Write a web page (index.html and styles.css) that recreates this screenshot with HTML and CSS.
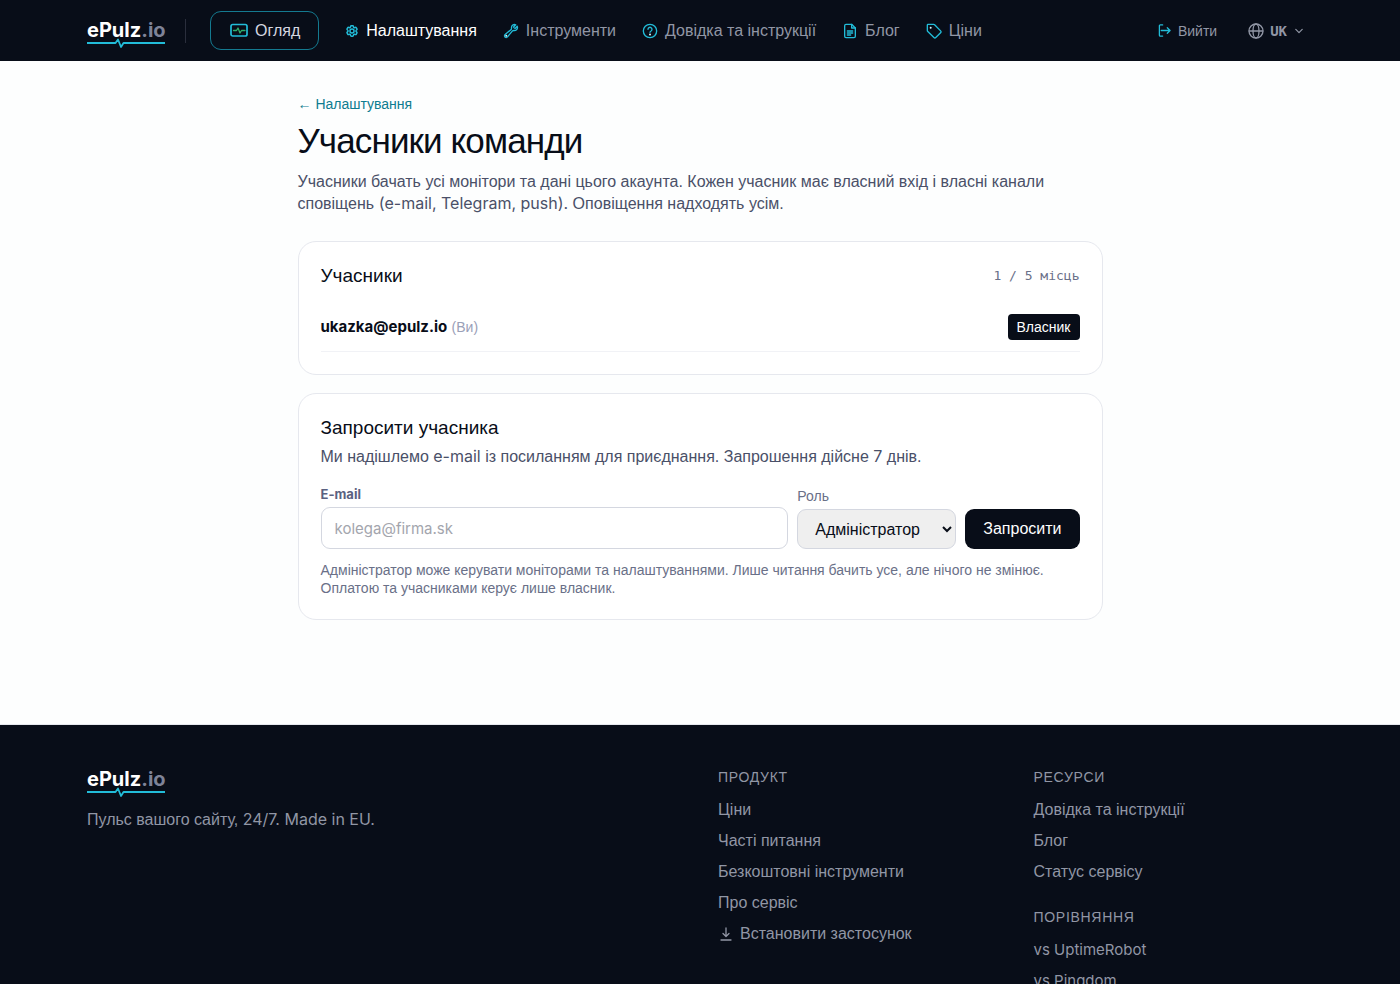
FILE: index.html
```html
<!DOCTYPE html>
<html lang="uk">
<head>
<meta charset="utf-8">
<meta name="viewport" content="width=device-width, initial-scale=1">
<title>Учасники команди – ePulz.io</title>
<link rel="stylesheet" href="styles.css">
</head>
<body>
<header class="site-header">
  <div class="container header-row">
    <a class="logo" href="#"><span class="logo-text">ePulz<span class="logo-tld">.io</span></span><svg class="logo-pulse" viewBox="0 0 78 10" aria-hidden="true"><path d="M0 5h28.500l2.500-3.500 3 7.500 2.500-4H78"/></svg></a>
    <span class="divider"></span>
    <nav class="main-nav" aria-label="Головна">
      <a class="nav-cta" href="#"><svg class="icon icon-monitor" viewBox="0 0 18 18" aria-hidden="true"><rect x="1" y="2.500" width="16" height="11.500" rx="1.800"/><path class="green" d="M3.500 8.500h3L8 6l2 5 1.500-2.500h3.500"/></svg>Огляд</a>
      <a class="nav-link active" href="#"><svg class="icon icon-gear" viewBox="0 0 24 24" aria-hidden="true"><path d="M9.600 3.900c.1-.5.600-.900 1.100-.900h2.600c.500 0 1 .4 1.100.9l.2 1.300c.1.400.300.700.600.900l.3.100c.3.200.700.200 1.100.100l1.200-.500c.5-.2 1.100 0 1.400.500l1.300 2.200c.3.500.200 1.100-.3 1.400l-1 .9c-.3.200-.4.600-.4 1v.3c0 .4.100.8.400 1l1 .9c.4.300.5.900.3 1.400l-1.300 2.200c-.3.500-.9.700-1.400.5l-1.200-.5c-.4-.1-.8-.1-1.100.1l-.3.100c-.3.200-.5.500-.6.900l-.2 1.300c-.1.500-.6.900-1.100.9h-2.600c-.5 0-1-.4-1.100-.9l-.2-1.300c-.1-.4-.3-.7-.6-.9l-.3-.1c-.3-.2-.7-.2-1.100-.1l-1.200.5c-.5.200-1.100 0-1.400-.5l-1.300-2.200c-.3-.5-.2-1.100.3-1.400l1-.9c.3-.2.400-.6.400-1v-.3c0-.4-.1-.8-.4-1l-1-.9c-.4-.3-.5-.9-.3-1.400l1.300-2.200c.3-.5.900-.7 1.400-.5l1.200.5c.4.1.8.1 1.100-.1l.3-.1c.3-.2.5-.5.6-.9z"/><circle cx="12" cy="12" r="3.500"/></svg>Налаштування</a>
      <a class="nav-link" href="#"><svg class="icon" viewBox="0 0 24 24" aria-hidden="true"><path d="M21.750 6.750a4.500 4.500 0 0 1-4.884 4.484c-1.076-.091-2.264.071-2.950.904l-7.152 8.684a2.548 2.548 0 1 1-3.586-3.586l8.684-7.152c.833-.686.995-1.874.904-2.950a4.500 4.500 0 0 1 6.336-4.486l-3.276 3.276a3.004 3.004 0 0 0 2.250 2.250l3.276-3.276c.256.565.398 1.192.398 1.852z"/><path class="dot" d="M4.900 19.100h.01"/></svg>Інструменти</a>
      <a class="nav-link" href="#"><svg class="icon" viewBox="0 0 24 24" aria-hidden="true"><circle cx="12" cy="12" r="10"/><path d="M9 9.500a3 3 0 1 1 4.600 2.500c-1 .6-1.600 1-1.600 2"/><path class="dot" d="M12 17.300h.01"/></svg>Довідка та інструкції</a>
      <a class="nav-link" href="#"><svg class="icon" viewBox="0 0 24 24" aria-hidden="true"><path d="M14.500 2H6a2 2 0 0 0-2 2v16a2 2 0 0 0 2 2h12a2 2 0 0 0 2-2V7.500z"/><path d="M14.500 2v5.500H20M8 12h8M8 15h8M8 18h5"/></svg>Блог</a>
      <a class="nav-link" href="#"><svg class="icon" viewBox="0 0 24 24" aria-hidden="true"><path d="M3 2h8.500a2 2 0 0 1 1.400.6l9 9.200a2 2 0 0 1 0 2.800l-7.200 7.200a2 2 0 0 1-2.800 0l-9.200-9A2 2 0 0 1 2 11.400V3a1 1 0 0 1 1-1z"/><path class="dot" d="M7 7h.01"/></svg>Ціни</a>
    </nav>
    <div class="header-end">
      <a class="logout" href="#"><svg class="icon icon-exit" viewBox="0 0 14 14" aria-hidden="true"><path d="M5 1H2.500a1 1 0 0 0-1 1v10a1 1 0 0 0 1 1H5M3.500 7H13M10 4l3 3-3 3"/></svg>Вийти</a>
      <button class="lang" type="button"><svg class="icon icon-globe" viewBox="0 0 24 24" aria-hidden="true"><circle cx="12" cy="12" r="10.500"/><ellipse cx="12" cy="12" rx="4.500" ry="10.500"/><path d="M2 12h20"/></svg>UK<svg class="icon icon-chevron" viewBox="0 0 10 10" aria-hidden="true"><path d="M1 3 5 7l4-4"/></svg></button>
    </div>
  </div>
</header>

<main class="page">
  <a class="back" href="#">← Налаштування</a>
  <h1 class="title">Учасники команди</h1>
  <p class="lead">Учасники бачать усі монітори та дані цього акаунта. Кожен учасник має власний вхід і власні канали сповіщень <span class="latin">(e-mail, Telegram, push).</span> Оповіщення надходять усім.</p>

  <section class="card">
    <div class="card-head">
      <h2 class="card-title">Учасники</h2>
      <span class="seats">1 / 5 місць</span>
    </div>
    <ul class="members">
      <li class="member"><span><strong class="email">ukazka@epulz.io</strong> <span class="you">(Ви)</span></span><span class="badge">Власник</span></li>
    </ul>
  </section>

  <section class="card">
    <h2 class="card-title">Запросити учасника</h2>
    <p class="card-text">Ми надішлемо <span class="latin">e-mail</span> із посиланням для приєднання. Запрошення дійсне <span class="latin">7</span> днів.</p>
    <form class="invite">
      <div class="field field-email">
        <label class="label label-email" for="email">E-mail</label>
        <input class="input" id="email" type="email" placeholder="kolega@firma.sk">
      </div>
      <div class="field">
        <label class="label" for="role">Роль</label>
        <select class="select" id="role"><option>Адміністратор</option><option>Лише читання</option></select>
      </div>
      <button class="submit" type="button">Запросити</button>
    </form>
    <p class="hint">Адміністратор може керувати моніторами та налаштуваннями. Лише читання бачить усе, але нічого не змінює. Оплатою та учасниками керує лише власник.</p>
  </section>
</main>

<footer class="site-footer">
  <div class="container footer-grid">
    <div class="footer-brand">
      <a class="logo" href="#"><span class="logo-text">ePulz<span class="logo-tld">.io</span></span><svg class="logo-pulse" viewBox="0 0 78 10" aria-hidden="true"><path d="M0 5h28.500l2.500-3.500 3 7.500 2.500-4H78"/></svg></a>
      <p class="tagline">Пульс вашого сайту, <span class="latin">24/7. Made in EU.</span></p>
    </div>
    <div class="footer-col">
      <h3 class="footer-title">Продукт</h3>
      <ul class="footer-list">
        <li><a href="#">Ціни</a></li>
        <li><a href="#">Часті питання</a></li>
        <li><a href="#">Безкоштовні інструменти</a></li>
        <li><a href="#">Про сервіс</a></li>
        <li><a class="install" href="#"><svg class="icon-download" viewBox="0 0 16 16" aria-hidden="true"><path d="M8 2v8M5 7.500 8 10.500l3-3M3 14h10"/></svg>Встановити застосунок</a></li>
      </ul>
    </div>
    <div class="footer-col">
      <h3 class="footer-title">Ресурси</h3>
      <ul class="footer-list">
        <li><a href="#">Довідка та інструкції</a></li>
        <li><a href="#">Блог</a></li>
        <li><a href="#">Статус сервісу</a></li>
      </ul>
      <h3 class="footer-title">Порівняння</h3>
      <ul class="footer-list">
        <li><a class="latin latin-link" href="#">vs UptimeRobot</a></li>
        <li><a class="latin latin-link" href="#">vs Pingdom</a></li>
      </ul>
    </div>
  </div>
</footer>
</body>
</html>
```
FILE: styles.css
```css
*, *::before, *::after { box-sizing: border-box; }

body {
  margin: 0;
  background: #fdfefe;
  color: #080d18;
  font-family: "Liberation Sans", Arial, sans-serif;
  font-size: 16px;
  line-height: 22px;
}

h1, h2, h3, p, ul { margin: 0; padding: 0; font-weight: 400; }
ul { list-style: none; }
a { color: inherit; text-decoration: none; }
button { font: inherit; cursor: pointer; }
.latin { font-family: Inter, sans-serif; line-height: 1; }
.latin-link { font-size: 15px; }

.container { max-width: 1298px; margin: 0 auto; padding: 0 36px; }

.site-header { background: #080d18; color: #9196a5; }
.header-row { display: flex; align-items: center; height: 61px; }

.logo { display: inline-flex; flex-direction: column; width: 78px; color: #fff; }
.logo-text { font: 700 20px/22px Inter, sans-serif; }
.logo-tld { color: #7e8398; }
.logo-pulse { width: 78px; height: 10px; margin-top: -3px; fill: none; stroke: #22bcd8; stroke-width: 1.8; stroke-linejoin: round; }
.header-row .logo { margin-top: 6px; }
.divider { width: 1px; height: 24px; margin: 0 24px 0 20px; background: #2a2e3c; }

.icon { flex: none; width: 16px; height: 16px; fill: none; stroke: #22bcd8; stroke-width: 2; stroke-linecap: round; stroke-linejoin: round; }
.icon .dot { stroke: #d8f6fb; stroke-width: 3; }
.icon .green { stroke: #2fae6b; stroke-width: 1.3; }
.icon-monitor { width: 18px; height: 18px; stroke-width: 1.7; }
.icon-gear { width: 14px; height: 14px; stroke-width: 2.5; }
.icon-exit { width: 13px; height: 13px; stroke-width: 1.4; }
.icon-globe { stroke: #9196a5; }
.icon-chevron { width: 8px; height: 8px; margin-left: 2px; stroke: #9196a5; stroke-width: 1.5; }

.main-nav { display: flex; align-items: center; gap: 26px; }
.nav-cta { display: flex; align-items: center; gap: 7px; height: 39px; padding: 0 18px 0 19px; border: 1px solid #147a90; border-radius: 11px; color: #d4d7e0; }
.nav-link { display: flex; align-items: center; gap: 7px; }
.nav-link.active { color: #fff; }

.header-end { display: flex; align-items: center; gap: 31px; margin-left: auto; padding-right: 10px; font-size: 14px; }
.logout { display: flex; align-items: center; gap: 7px; }
.lang { display: flex; align-items: center; gap: 6px; padding: 0; border: 0; background: none; color: #9196a5; font: 700 14px/20px "DejaVu Sans Mono", monospace; }

.page { max-width: 841px; margin: 0 auto; padding: 33px 18px 104px; }
.back { display: block; color: #0e7c90; font-size: 14px; line-height: 20px; }
.title { margin-top: 7px; font-size: 35px; line-height: 40px; letter-spacing: -0.025em; }
.lead { margin: 10px 0 26px; color: #4a5068; }

.card { padding: 22px; border: 1px solid #e6e8ee; border-radius: 18px; background: #fff; }
.card + .card { margin-top: 18px; }
.card-head { display: flex; align-items: center; justify-content: space-between; }
.card-title { font-size: 19px; line-height: 24px; }
.seats { color: #6a7088; font-family: "DejaVu Sans Mono", monospace; font-size: 13px; }
.members { margin-top: 13px; }
.member { display: flex; align-items: center; justify-content: space-between; padding: 13px 0 11px; border-bottom: 1px solid #f1f2f6; }
.email { font-family: Inter, sans-serif; font-size: 15px; font-weight: 700; line-height: 1; }
.you { color: #9aa0b8; font-size: 14px; }
.badge { padding: 3px 9px; border-radius: 4px; background: #080d18; color: #fff; font-size: 14px; line-height: 20px; }

.card-text { margin-top: 6px; color: #4a5068; }
.invite { display: flex; align-items: flex-end; gap: 9px; margin-top: 17px; }
.field { display: flex; flex-direction: column; }
.field-email { flex: 1; }
.label { margin-bottom: 4px; color: #6a7088; font-size: 14px; line-height: 18px; }
.label-email { color: #5a6180; font: 700 13px/18px Inter, sans-serif; }
.input { width: 100%; height: 42px; padding: 0 13px; border: 1px solid #d4d7e0; border-radius: 9px; background: #fff; font: 15px Inter, sans-serif; }
.input::placeholder { color: #a3a5ad; opacity: 1; }
.select { min-width: 159px; height: 40px; padding: 0 13px; border: 1px solid #d4d7e0; border-radius: 9px; background-color: #efefef; color: #080d18; font: inherit; }
.submit { height: 40px; padding: 0 18px; border: 0; border-radius: 9px; background: #080d18; color: #fff; }
.hint { margin-top: 12px; color: #6a7088; font-size: 14px; line-height: 18px; }

.site-footer { border-top: 1px solid #e6e8ee; background: #080d18; color: #9196a5; }
.footer-grid { display: grid; grid-template-columns: repeat(4, 1fr); gap: 36px; padding-top: 43px; padding-bottom: 45px; }
.footer-brand { grid-column: span 2; }
.tagline { margin-top: 12px; }
.footer-title { margin-bottom: 13px; font-size: 14px; line-height: 18px; letter-spacing: 0.05em; text-transform: uppercase; }
.footer-list { display: flex; flex-direction: column; gap: 9px; }
.footer-list + .footer-title { margin-top: 25px; }
.install { display: flex; align-items: center; gap: 6px; }
.icon-download { width: 16px; height: 16px; fill: none; stroke: #9196a5; stroke-width: 1.3; stroke-linecap: round; stroke-linejoin: round; }
```
